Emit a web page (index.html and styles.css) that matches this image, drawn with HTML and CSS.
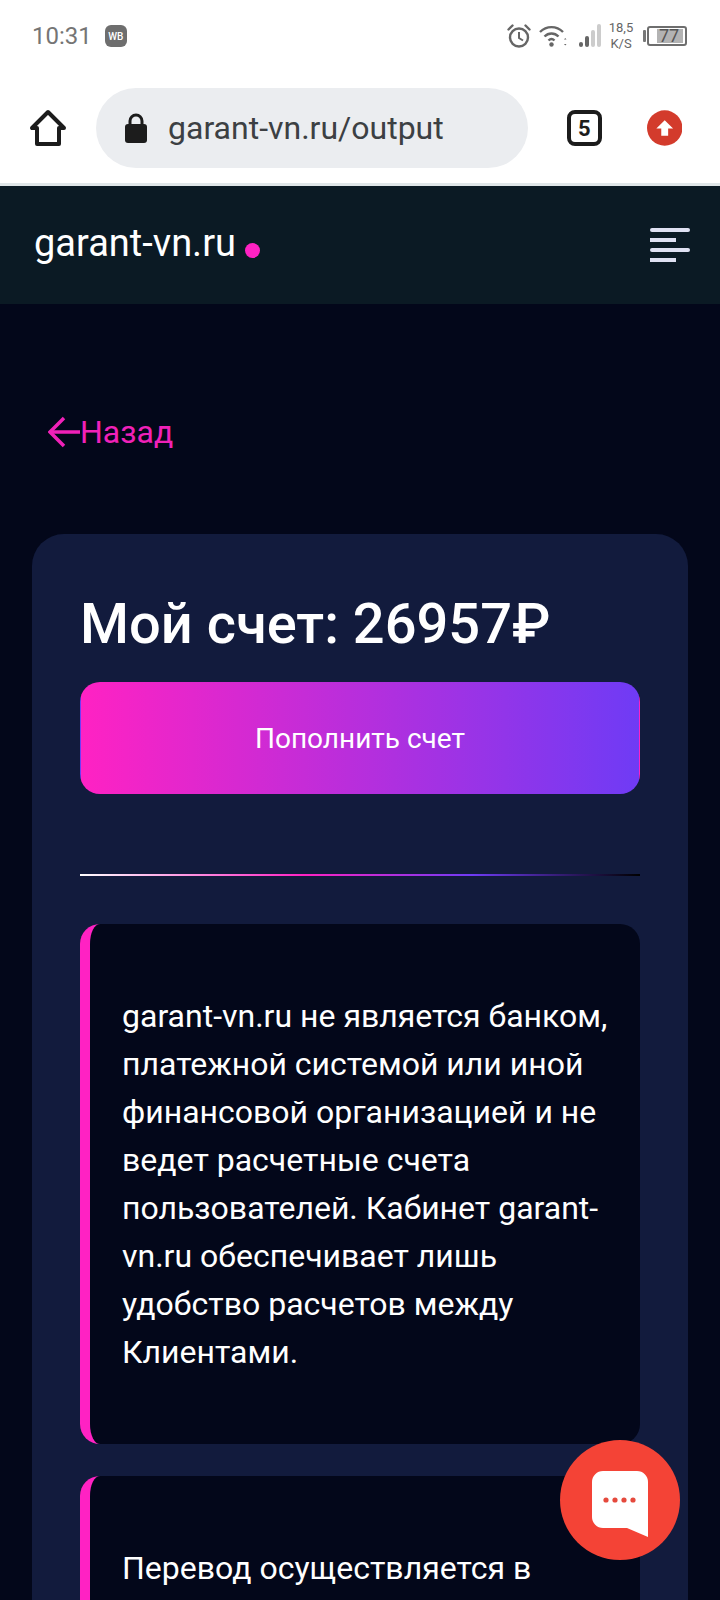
FILE: index.html
```html
<!DOCTYPE html>
<html lang="ru">

<head>
    <meta charset="UTF-8">
    <meta name="viewport" content="width=device-width, initial-scale=1.0">
    <title>garant-vn.ru</title>
    <link rel="stylesheet" href="styles.css">
</head>

<body>
    <div class="status-bar">
        <div class="status-left">
            <span class="status-time">10:31</span>
            <span class="status-badge">WB</span>
        </div>
        <div class="status-right">
            <svg class="icon-alarm" width="24" height="24" viewBox="0 0 24 24" fill="none" stroke="#666" stroke-width="2.4">
                <circle cx="12" cy="13.5" r="9"/>
                <path d="M12 8v6l4 2.5" stroke-width="2"/>
                <path d="M1.5 5.5 5.5 1.5M18.5 1.5l4 4" stroke-linecap="round"/>
            </svg>
            <svg class="icon-wifi" width="28" height="22" viewBox="0 0 28 22" fill="none" stroke="#666" stroke-width="2.4">
                <path d="M1 7c6.500-6.500 16.500-6.500 23 0"/>
                <path d="M5.500 11.500c4-4 10-4 14 0"/>
                <path d="M9.500 15.500c1.800-1.800 4.200-1.800 6 0"/>
                <circle cx="12.500" cy="19.500" r="2.200" fill="#666" stroke="none"/>
                <path d="M25 14.500h2.500l-1.250-1.500zM25 19h2.500l-1.250 1.500z" fill="#666" stroke="none"/>
            </svg>
            <svg class="icon-signal" width="23" height="24" viewBox="0 0 23 24">
                <rect x="0" y="18" width="4" height="5" rx="2" fill="#666"/>
                <rect x="6" y="12" width="4" height="11" rx="2" fill="#666"/>
                <rect x="12" y="6" width="4" height="17" rx="2" fill="#ccc"/>
                <rect x="18" y="0" width="4" height="23" rx="2" fill="#ccc"/>
            </svg>
            <div class="status-speed">18,5<br>K/S</div>
            <div class="battery">
                <span class="battery-cap"></span>
                <div class="battery-body"><span class="battery-level">77</span></div>
            </div>
        </div>
    </div>

    <div class="browser-bar">
        <svg class="icon-home" width="38" height="38" viewBox="0 0 38 38" fill="none" stroke="#1c1c1c" stroke-width="4" stroke-linejoin="round">
            <path d="M19 3 3 19h5v16h22V19h5z"/>
        </svg>
        <div class="url-pill">
            <svg class="icon-lock" width="22" height="30" viewBox="0 0 22 30">
                <path d="M5 12V8a6 6 0 0 1 12 0v4" fill="none" stroke="#1c1c1c" stroke-width="3"/>
                <rect x="0" y="11" width="22" height="19" rx="3" fill="#1c1c1c"/>
            </svg>
            <span class="url-text">garant-vn.ru/output</span>
        </div>
        <div class="tab-count">5</div>
        <svg class="icon-update" width="36" height="36" viewBox="0 0 36 36">
            <circle cx="18" cy="18" r="18" fill="#d33b2c"/>
            <path d="M18 10 26.500 18.500h-5V26h-7v-7.500h-5z" fill="#fff"/>
        </svg>
    </div>

    <header class="site-header">
        <div class="logo">
            <span class="logo-text">garant-vn.ru</span>
            <span class="logo-dot"></span>
        </div>
        <div class="menu-btn">
            <span class="menu-line"></span>
            <span class="menu-line short"></span>
            <span class="menu-line"></span>
            <span class="menu-line short"></span>
        </div>
    </header>

    <main class="page">
        <a class="back-link" href="#">
            <svg width="32" height="32" viewBox="0 0 32 32" fill="none" stroke="#f021b8" stroke-width="3.500">
                <path d="M32 16H3"/>
                <path d="M16 2 2 16l14 14"/>
            </svg>
            <span>Назад</span>
        </a>

        <section class="account-card">
            <h1 class="account-title">Мой счет: 26957₽</h1>
            <button class="topup-btn" type="button">Пополнить счет</button>
            <div class="divider"></div>

            <div class="notice">
                <p>garant-vn.ru не является банком, платежной системой или иной финансовой организацией и не ведет расчетные счета пользователей. Кабинет garant-vn.ru обеспечивает лишь удобство расчетов между Клиентами.</p>
            </div>

            <div class="notice">
                <p>Перевод осуществляется в</p>
            </div>
        </section>
    </main>

    <div class="chat-btn">
        <svg width="56" height="66" viewBox="0 0 56 66">
            <path d="M11 0h34a11 11 0 0 1 11 11v55L35 57H11A11 11 0 0 1 0 46V11A11 11 0 0 1 11 0z" fill="#fff"/>
            <circle cx="14" cy="29" r="2.600" fill="#e5493c"/>
            <circle cx="23" cy="29" r="2.600" fill="#e5493c"/>
            <circle cx="32" cy="29" r="2.600" fill="#e5493c"/>
            <circle cx="41" cy="29" r="2.600" fill="#e5493c"/>
        </svg>
    </div>
</body>

</html>
```

FILE: styles.css
```css
html,
body {
    height: 1600px;
    overflow: hidden;
}

body {
    font-family: Roboto, Arial, sans-serif;
    margin: 0;
    background-color: #03071a;
    color: #fff;
}

/* phone status bar */
.status-bar {
    height: 64px;
    padding: 8px 32px 0;
    background-color: #fff;
    display: flex;
    justify-content: space-between;
    align-items: center;
    box-sizing: border-box;
}

.status-left {
    display: flex;
    align-items: center;
    gap: 13px;
}

.status-time {
    font-size: 24px;
    color: #757575;
}

.status-badge {
    width: 22px;
    height: 22px;
    border-radius: 6px;
    background-color: #6e6e6e;
    color: #fff;
    font-size: 10px;
    font-weight: 500;
    display: flex;
    align-items: center;
    justify-content: center;
}

.status-right {
    display: flex;
    align-items: center;
    margin-right: 1px;
}

.icon-wifi {
    margin-left: 8px;
}

.icon-signal {
    margin-left: 12px;
}

.status-speed {
    margin-left: 5px;
    width: 28px;
    font-size: 13px;
    line-height: 16px;
    text-align: center;
    color: #666;
}

.battery {
    margin-left: 8px;
    display: flex;
    align-items: center;
}

.battery-cap {
    width: 3px;
    height: 12px;
    background-color: #777;
    border-radius: 1px;
    margin-right: 1px;
}

.battery-body {
    width: 40px;
    height: 20px;
    box-sizing: border-box;
    border: 2px solid #6e6e6e;
    border-radius: 3px;
    padding: 1px 2px;
    display: flex;
    justify-content: flex-end;
}

.battery-level {
    width: 26px;
    height: 14px;
    background-color: #b3b3b3;
    color: #555;
    font-size: 18px;
    line-height: 14px;
    padding-left: 2px;
    box-sizing: border-box;
}

/* browser toolbar */
.browser-bar {
    height: 110px;
    padding: 9px 38px 0 29px;
    background-color: #fff;
    border-bottom: 3px solid #e0e6e8;
    display: flex;
    align-items: center;
}

.icon-home {
    flex: none;
}

.url-pill {
    flex: none;
    width: 432px;
    height: 80px;
    margin-left: 29px;
    padding-left: 29px;
    box-sizing: border-box;
    border-radius: 40px;
    background-color: #ebedf0;
    display: flex;
    align-items: center;
    gap: 21px;
}

.url-text {
    font-size: 32px;
    color: #3c4043;
}

.tab-count {
    width: 35px;
    height: 36px;
    margin-left: 39px;
    box-sizing: border-box;
    border: 4px solid #1c1c1c;
    border-radius: 8px;
    font-size: 22px;
    font-weight: 700;
    color: #1c1c1c;
    display: flex;
    align-items: center;
    justify-content: center;
}

.icon-update {
    margin-left: 45px;
}

/* site header */
.site-header {
    height: 118px;
    background-color: #0b1a24;
    padding: 0 30px 0 34px;
    display: flex;
    align-items: center;
    justify-content: space-between;
}

.logo {
    display: flex;
    align-items: center;
    gap: 9px;
    margin-bottom: 4px;
}

.logo-text {
    font-size: 38px;
}

.logo-dot {
    width: 15px;
    height: 15px;
    margin-top: 15px;
    border-radius: 50%;
    background-color: #ff22c3;
}

.menu-btn {
    width: 40px;
    display: flex;
    flex-direction: column;
    gap: 6px;
}

.menu-line {
    display: block;
    width: 40px;
    height: 4px;
    border-radius: 2px;
    background-color: #dfe1f2;
}

.menu-line.short {
    width: 26px;
    border-radius: 0;
}

/* page body */
.page {
    padding: 110px 32px 0;
}

.back-link {
    display: flex;
    align-items: center;
    height: 36px;
    padding-left: 16px;
    color: #f021b8;
    font-size: 32px;
    text-decoration: none;
}

.account-card {
    margin-top: 84px;
    padding: 50px 48px 48px;
    background-color: #121b3d;
    border-radius: 32px;
}

.account-title {
    margin: 0 0 18px;
    font-size: 56px;
    line-height: 80px;
    font-weight: 500;
}

.topup-btn {
    display: block;
    width: 100%;
    height: 112px;
    border: 1px solid transparent;
    border-radius: 20px;
    background-image: linear-gradient(90deg, #ff22c3, #6f3bf5);
    color: #fff;
    font-family: inherit;
    font-size: 28px;
    cursor: pointer;
}

.divider {
    height: 2px;
    margin: 80px 0 48px;
    background-image: linear-gradient(90deg, #fff, #ff22c3 40%, #6f3bf5 70%, #000);
}

.notice {
    margin-bottom: 32px;
    padding: 68px 32px;
    background-color: #03071a;
    border-left: 10px solid #ff22c3;
    border-radius: 20px;
}

.notice p {
    margin: 0;
    font-size: 32px;
    line-height: 48px;
}

.chat-btn {
    position: fixed;
    left: 560px;
    top: 1440px;
    width: 120px;
    height: 120px;
    border-radius: 50%;
    background-color: #f44336;
    display: flex;
    align-items: center;
    justify-content: center;
}

.chat-btn svg {
    margin-top: 8px;
}
```
